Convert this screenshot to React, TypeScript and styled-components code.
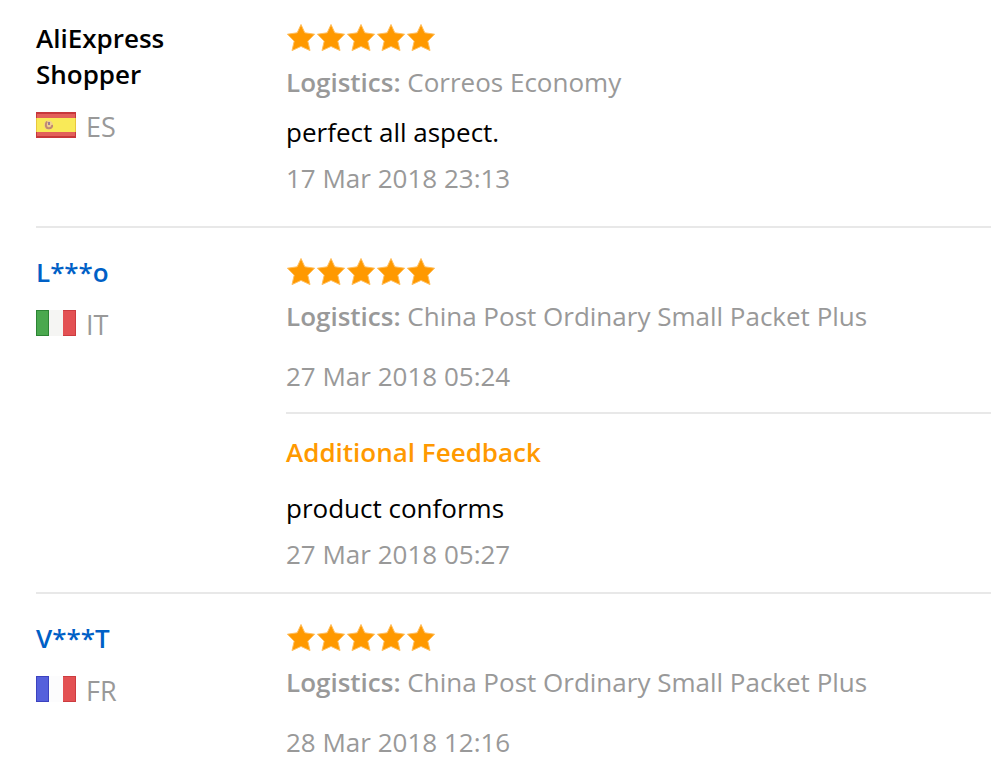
import React from "react";
import styled, { createGlobalStyle } from "styled-components";

const GlobalStyle = createGlobalStyle`
  * { box-sizing: border-box; }
  body { margin: 0; background: #fff; font-family: "Open Sans", Arial, sans-serif; font-size: 26px; line-height: 36px; color: #000; }
  p, h3 { margin: 0; }
`;

const List = styled.main`
  padding-left: 36px;
`;

const Item = styled.article<{ $tail: number }>`
  display: grid;
  grid-template-columns: 250px 1fr;
  padding: 26px 0 ${(p) => p.$tail}px;
  border-bottom: 2px solid #e8e8e8;
  &:first-child { padding-top: 20px; }
  &:last-child { border-bottom: 0; }
`;

const Buyer = styled.div`
  padding-right: 60px;
  font-weight: 600;
`;

const Name = styled.span`
  display: block;
`;

const NameLink = styled.a`
  display: block;
  color: #0060c6;
  text-decoration: none;
`;

const Country = styled.div`
  display: flex;
  align-items: center;
  gap: 10px;
  margin-top: 17px;
  font-size: 27px;
  font-weight: 400;
  color: #999;
`;

const Flag = styled.svg`
  width: 40px;
  height: 26px;
  margin-bottom: 4px;
`;

const Stars = styled.div`
  display: flex;
  height: 36px;
  align-items: center;
  svg { width: 30px; height: 30px; }
`;

const Logistics = styled.p`
  margin-top: 8px;
  color: #999;
`;

const Label = styled.span`
  font-weight: 600;
`;

const Comment = styled.p`
  margin-top: 14px;
`;

const Time = styled.time<{ $gap: number }>`
  display: block;
  margin-top: ${(p) => p.$gap}px;
  color: #999;
`;

const Extra = styled.section`
  margin-top: 18px;
  padding-top: 20px;
  border-top: 2px solid #e8e8e8;
  ${Comment} { margin-top: 20px; }
`;

const ExtraTitle = styled.h3`
  font-size: 26px;
  font-weight: 600;
  color: #f90;
`;

const STAR = "M15 1.5L18.8 9.8L28.6 11.2L21.8 18.2L24 27.6L15 23.4L6 27.6L8.2 18.2L1.4 11.2L11.2 9.8Z";

const Star = () => (
  <svg viewBox="0 0 30 30" aria-hidden="true">
    <path d={STAR} fill="#f90" stroke="#ffc060" strokeWidth="1" strokeLinejoin="round" />
  </svg>
);

const FlagIcon = ({ code }: { code: string }) => {
  const left = code === "IT" ? ["#4aa84e", "#2c8434"] : ["#5560dc", "#3c42c0"];
  return (
    <Flag viewBox="0 0 40 26" role="img" aria-label={code}>
      {code === "ES" ? (
        <>
          <path d="M0 0h40v26H0z" fill="#c8373b" />
          <path d="M1 2h38v4H1zM1 20h38v4H1z" fill="#e2605a" />
          <path d="M0 6h40v14H0z" fill="#e9c63c" />
          <path d="M1 6h38v14H1z" fill="#f9ea58" />
          <circle cx="12.5" cy="13" r="4.5" fill="#f0d08c" />
          <path d="M11 9.5C9 12 9.5 16 12.5 16.2S16.5 14.5 16 13" fill="none" stroke="#c08a70" strokeWidth="2" />
          <path d="M12 10h2v3h-2z" fill="#9a7f94" />
        </>
      ) : (
        <>
          <path d="M13 0h14v26H13z" fill={code === "IT" ? "#f5f5f3" : "#fcfcfd"} />
          <path d="M0 0h13v26H0z" fill={left[1]} />
          <path d="M1 1h11v24H1z" fill={left[0]} />
          <path d="M27 0h13v26H27z" fill="#cc3c40" />
          <path d="M27 1h12v24H27z" fill="#e35153" />
        </>
      )}
    </Flag>
  );
};

type Review = {
  name: string; linked?: boolean; code: string; logistics: string;
  text?: string; time: string; extra?: { text: string; time: string }; tail: number;
};

const reviews: Review[] = [
  { name: "AliExpress Shopper", code: "ES", logistics: "Correos Economy", text: "perfect all aspect.", time: "17 Mar 2018 23:13", tail: 30 },
  { name: "L***o", linked: true, code: "IT", logistics: "China Post Ordinary Small Packet Plus", time: "27 Mar 2018 05:24", extra: { text: "product conforms", time: "27 Mar 2018 05:27" }, tail: 20 },
  { name: "V***T", linked: true, code: "FR", logistics: "China Post Ordinary Small Packet Plus", time: "28 Mar 2018 12:16", tail: 20 },
];

export default function App() {
  return (
    <>
      <GlobalStyle />
      <List>
        {reviews.map((r) => (
          <Item key={r.name} $tail={r.tail}>
            <Buyer>
              {r.linked ? <NameLink href="#">{r.name}</NameLink> : <Name>{r.name}</Name>}
              <Country><FlagIcon code={r.code} />{r.code}</Country>
            </Buyer>
            <div>
              <Stars role="img" aria-label="5 out of 5 stars">
                {[1, 2, 3, 4, 5].map((n) => <Star key={n} />)}
              </Stars>
              <Logistics><Label>Logistics:</Label> {r.logistics}</Logistics>
              {r.text && <Comment>{r.text}</Comment>}
              <Time $gap={r.text ? 10 : 24}>{r.time}</Time>
              {r.extra && (
                <Extra>
                  <ExtraTitle>Additional Feedback</ExtraTitle>
                  <Comment>{r.extra.text}</Comment>
                  <Time $gap={10}>{r.extra.time}</Time>
                </Extra>
              )}
            </div>
          </Item>
        ))}
      </List>
    </>
  );
}
